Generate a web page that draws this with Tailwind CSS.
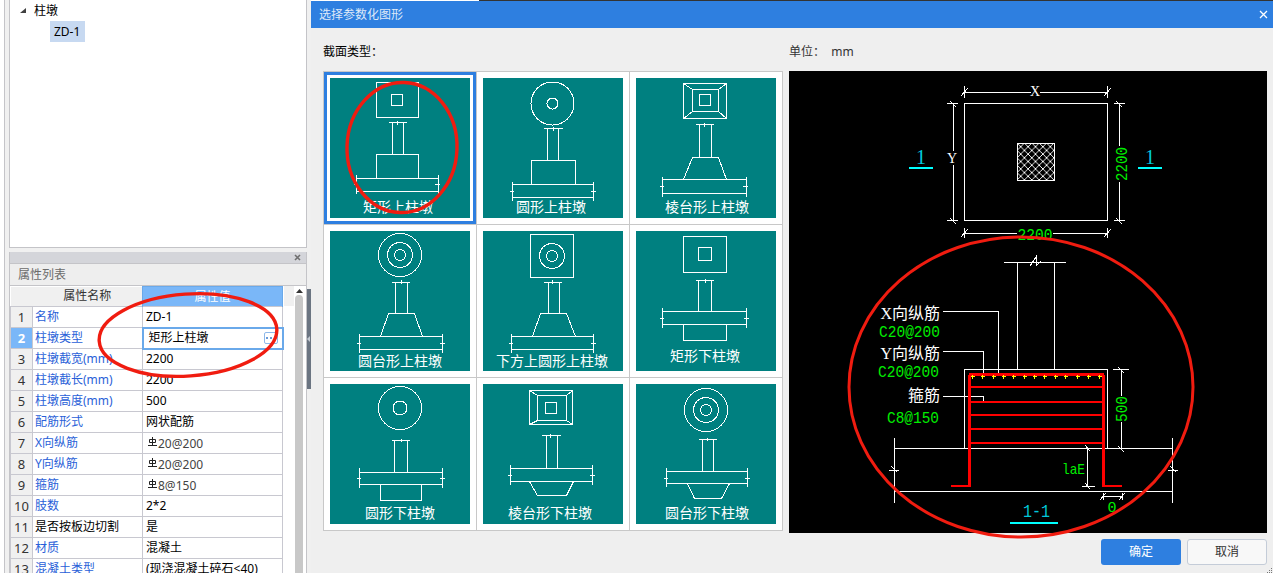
<!DOCTYPE html>
<html lang="zh-CN">
<head>
    <meta charset="UTF-8">
    <title>选择参数化图形</title>
    <script src="https://cdn.jsdelivr.net/npm/@tailwindcss/browser@4"></script>
</head>
<body class="bg-white">
<div class="relative flex w-[1273px] h-[573px] overflow-hidden bg-white text-[12px] leading-none font-['Noto_Sans','Noto_Sans_CJK_SC',sans-serif]">

    <!-- left: tree + property list -->
    <div class="flex ml-[4px] w-[307px] h-full shrink-0 border-l border-[#c4c4c8] bg-[#f0f0f0] pl-[4px]">
        <div class="flex flex-col w-[298px] h-full shrink-0">
            <div class="h-[248px] shrink-0 bg-white border-x border-b border-[#c4c4c8] relative">
                <div class="flex items-center h-[21px] pl-[10px]">
                    <svg width="7" height="6" class="mr-[7px]"><path d="M6 0V5H0Z" fill="#404040"/></svg>
                    <span class="text-black">柱墩</span>
                </div>
                <div class="ml-[40px] w-[35px] h-[21px] bg-[#c7d9f1] flex items-center pl-[4px] text-black">ZD-1</div>
            </div>
            <div class="mt-[4px] h-[12px] shrink-0 bg-[#d4d5da] border-x border-b border-[#c4c4c8] flex items-center justify-end pr-[5px]">
                <svg width="7" height="7"><path d="M1 1L6 6M6 1L1 6" stroke="#6f6f6f" stroke-width="1.6"/></svg>
            </div>
            <div class="h-[22px] shrink-0 bg-[#eeeeee] border-x border-b border-[#c4c4c8] flex items-center pl-[8px] text-[#6b6b6b]">属性列表</div>
            <div class="flex flex-1 min-h-0 bg-white border-x border-[#c4c4c8]">
                <table class="table-fixed border-collapse w-[272px] h-[20px] shrink-0 self-start">
                    <colgroup><col class="w-[22px]"><col class="w-[110px]"><col class="w-[140px]"></colgroup>
                    <thead>
                        <tr class="h-[20px]">
                            <th class="bg-[#f0f0f0] p-0"></th>
                            <th class="bg-[#f0f0f0] p-0 font-normal text-[#333333]">属性名称</th>
                            <th class="bg-[#7ab7f8] p-0 font-normal text-white border-x border-t border-[#6aa9ea]">属性值</th>
                        </tr>
                    </thead>
                    <tbody class="text-black">
                        <tr class="h-[21px]"><td class="border border-[#c8c8d0] bg-[#f0f0f0] text-center text-[13px] p-0 text-[#333333]">1</td><td class="border border-[#c8c8d0] pl-[2px] text-[#2a5fd8] p-0">名称</td><td class="border border-[#c8c8d0] pl-[3px] p-0">ZD-1</td></tr>
                        <tr class="h-[21px]"><td class="border border-[#c8c8d0] bg-[#7ab7f8] text-center text-[13px] p-0 text-white font-bold">2</td><td class="border border-[#c8c8d0] pl-[2px] text-[#2a5fd8] p-0">柱墩类型</td><td class="border-2 border-[#6aa9ea] pl-[5px] p-0 relative">矩形上柱墩<span class="absolute right-[4px] top-[3px] w-[14px] h-[12px] flex items-center justify-center border border-[#8db8ea] rounded-[2px] bg-white"><svg width="10" height="2"><path d="M0 0H2V2H0ZM4 0H6V2H4ZM8 0H10V2H8Z" fill="#6a9bd8"/></svg></span></td></tr>
                        <tr class="h-[21px]"><td class="border border-[#c8c8d0] bg-[#f0f0f0] text-center text-[13px] p-0 text-[#333333]">3</td><td class="border border-[#c8c8d0] pl-[2px] text-[#2a5fd8] p-0">柱墩截宽(mm)</td><td class="border border-[#c8c8d0] pl-[3px] p-0">2200</td></tr>
                        <tr class="h-[21px]"><td class="border border-[#c8c8d0] bg-[#f0f0f0] text-center text-[13px] p-0 text-[#333333]">4</td><td class="border border-[#c8c8d0] pl-[2px] text-[#2a5fd8] p-0">柱墩截长(mm)</td><td class="border border-[#c8c8d0] pl-[3px] p-0">2200</td></tr>
                        <tr class="h-[21px]"><td class="border border-[#c8c8d0] bg-[#f0f0f0] text-center text-[13px] p-0 text-[#333333]">5</td><td class="border border-[#c8c8d0] pl-[2px] text-[#2a5fd8] p-0">柱墩高度(mm)</td><td class="border border-[#c8c8d0] pl-[3px] p-0">500</td></tr>
                        <tr class="h-[21px]"><td class="border border-[#c8c8d0] bg-[#f0f0f0] text-center text-[13px] p-0 text-[#333333]">6</td><td class="border border-[#c8c8d0] pl-[2px] text-[#2a5fd8] p-0">配筋形式</td><td class="border border-[#c8c8d0] pl-[3px] p-0">网状配筋</td></tr>
                        <tr class="h-[21px]"><td class="border border-[#c8c8d0] bg-[#f0f0f0] text-center text-[13px] p-0 text-[#333333]">7</td><td class="border border-[#c8c8d0] pl-[2px] text-[#2a5fd8] p-0">X向纵筋</td><td class="border border-[#c8c8d0] pl-[5px] p-0 text-[#444444]"><svg width="9" height="9" class="inline align-[2px] mr-[1px]"><path d="M4.5 0V9M1.5 2.5H7.5V5.5H1.5ZM0 8.5H9" fill="none" stroke="#222222"/></svg>20@200</td></tr>
                        <tr class="h-[21px]"><td class="border border-[#c8c8d0] bg-[#f0f0f0] text-center text-[13px] p-0 text-[#333333]">8</td><td class="border border-[#c8c8d0] pl-[2px] text-[#2a5fd8] p-0">Y向纵筋</td><td class="border border-[#c8c8d0] pl-[5px] p-0 text-[#444444]"><svg width="9" height="9" class="inline align-[2px] mr-[1px]"><path d="M4.5 0V9M1.5 2.5H7.5V5.5H1.5ZM0 8.5H9" fill="none" stroke="#222222"/></svg>20@200</td></tr>
                        <tr class="h-[21px]"><td class="border border-[#c8c8d0] bg-[#f0f0f0] text-center text-[13px] p-0 text-[#333333]">9</td><td class="border border-[#c8c8d0] pl-[2px] text-[#2a5fd8] p-0">箍筋</td><td class="border border-[#c8c8d0] pl-[5px] p-0 text-[#444444]"><svg width="9" height="9" class="inline align-[2px] mr-[1px]"><path d="M4.5 0V9M1.5 2.5H7.5V5.5H1.5ZM0 8.5H9" fill="none" stroke="#222222"/></svg>8@150</td></tr>
                        <tr class="h-[21px]"><td class="border border-[#c8c8d0] bg-[#f0f0f0] text-center text-[13px] p-0 text-[#333333]">10</td><td class="border border-[#c8c8d0] pl-[2px] text-[#2a5fd8] p-0">肢数</td><td class="border border-[#c8c8d0] pl-[3px] p-0">2*2</td></tr>
                        <tr class="h-[21px]"><td class="border border-[#c8c8d0] bg-[#f0f0f0] text-center text-[13px] p-0 text-[#333333]">11</td><td class="border border-[#c8c8d0] pl-[2px] p-0">是否按板边切割</td><td class="border border-[#c8c8d0] pl-[3px] p-0">是</td></tr>
                        <tr class="h-[21px]"><td class="border border-[#c8c8d0] bg-[#f0f0f0] text-center text-[13px] p-0 text-[#333333]">12</td><td class="border border-[#c8c8d0] pl-[2px] text-[#2a5fd8] p-0">材质</td><td class="border border-[#c8c8d0] pl-[3px] p-0">混凝土</td></tr>
                        <tr class="h-[21px]"><td class="border border-[#c8c8d0] bg-[#f0f0f0] text-center text-[13px] p-0 text-[#333333]">13</td><td class="border border-[#c8c8d0] pl-[2px] text-[#2a5fd8] p-0">混凝土类型</td><td class="border border-[#c8c8d0] pl-[3px] p-0">(现浇混凝土碎石&lt;40)</td></tr>
                    </tbody>
                </table>
                <div class="w-[10px] h-[20px] bg-[#f0f0f0] shrink-0"></div>
                <div class="flex-1 flex flex-col items-center pr-[1px]">
                    <svg width="9" height="5" class="mt-[3px] mb-[1px]"><path d="M4.5 0L8 4H1Z" fill="#333333"/></svg>
                    <div class="w-[8px] flex-1 bg-[#c8c8c8] rounded-t-[4px]"></div>
                </div>
            </div>
        </div>
        <div class="w-[4px] h-[100px] mt-[289px] bg-[#6b7582] flex items-center shrink-0">
            <svg width="4" height="8"><path d="M3 1V7L0 4Z" fill="#c5ccd4"/></svg>
        </div>
    </div>

    <!-- dialog -->
    <div class="flex flex-col flex-1 min-w-0 h-full bg-[#efefef]">
        <div class="flex h-[1px] shrink-0 bg-white"><div class="ml-[168px] flex-1 bg-[#333333]"></div></div>
        <div class="flex items-center justify-between h-[27px] shrink-0 bg-[#2e7fe0] pl-[8px] pr-[5px] text-[#dfe9f8]">
            <span>选择参数化图形</span>
            <svg width="9" height="9"><path d="M1 1L8 8M8 1L1 8" stroke="#ffffff" stroke-width="1.3"/></svg>
        </div>
        <div class="flex h-[43px] shrink-0 items-center pl-[12px] pt-[5px] text-black">
            <span class="w-[466px]">截面类型：</span>
            <span class="text-[#333333]">单位：&nbsp; mm</span>
        </div>
        <div class="flex pl-[12px] gap-[6px] items-start">
            <!-- section type tiles -->
            <div class="grid grid-cols-[repeat(3,153px)] border-l border-t border-[#c8c8c8] bg-white">
                <div class="p-[6px] border-r border-b border-[#c8c8c8]">
                    <svg width="140" height="140" shape-rendering="crispEdges" class="block bg-[#008080] outline-3 outline-offset-[3px] outline-[#2e7fe0]" fill="none" stroke="#ffffff">
                        <rect x="46.5" y="4.5" width="42" height="35"/><rect x="61.5" y="16.5" width="11" height="11"/>
                        <path d="M58.5 44.5H76.5M67.5 43V47M62.5 44.5V76.5M73.5 44.5V76.5M46.5 100.5V76.5H88.5V100.5M26.5 97V116M108.5 97V116M26.5 100.5H108.5M26.5 113.5H108.5M24 106.5H28M105 106.5H110"/>
                        <text x="68" y="134" text-anchor="middle" fill="#ffffff" stroke="none" class="text-[14px]">矩形上柱墩</text>
                    </svg>
                </div>
                <div class="p-[6px] border-r border-b border-[#c8c8c8]">
                    <svg width="140" height="140" shape-rendering="crispEdges" class="block bg-[#008080]" fill="none" stroke="#ffffff">
                        <circle cx="69.5" cy="25.5" r="21.5"/><circle cx="69.5" cy="25.5" r="5.5"/>
                        <path d="M60.5 50.5H79.5M70 49V53M64.5 50.5V82.5M75.5 50.5V82.5M48.5 106.5V82.5H92.5V106.5M29.5 104V123M110.5 104V123M29.5 106.5H110.5M29.5 119.5H110.5M27 113.5H31M108 113.5H113"/>
                        <text x="68" y="134" text-anchor="middle" fill="#ffffff" stroke="none" class="text-[14px]">圆形上柱墩</text>
                    </svg>
                </div>
                <div class="p-[6px] border-r border-b border-[#c8c8c8]">
                    <svg width="140" height="140" shape-rendering="crispEdges" class="block bg-[#008080]" fill="none" stroke="#ffffff">
                        <rect x="47.5" y="5.5" width="43" height="35"/><rect x="56.5" y="11.5" width="26" height="22"/><rect x="63.5" y="16.5" width="11" height="11"/>
                        <path d="M47.5 5.5L56.5 11.5M90.5 5.5L82.5 11.5M47.5 40.5L56.5 33.5M90.5 40.5L82.5 33.5"/>
                        <path d="M59.5 46.5H77.5M68 45V49M63.5 46.5V79.5M75.5 46.5V79.5M47.5 101.5L56.5 79.5H82.5L90.5 101.5M26.5 99V119M110.5 99V119M26.5 101.5H110.5M26.5 115.5H110.5M24 108.5H28M107 108.5H112"/>
                        <text x="71" y="134" text-anchor="middle" fill="#ffffff" stroke="none" class="text-[14px]">棱台形上柱墩</text>
                    </svg>
                </div>
                <div class="p-[6px] border-r border-b border-[#c8c8c8]">
                    <svg width="140" height="140" shape-rendering="crispEdges" class="block bg-[#008080]" fill="none" stroke="#ffffff">
                        <circle cx="70" cy="24" r="21.5"/><circle cx="70" cy="24" r="12.5"/><circle cx="70" cy="24" r="5.5"/>
                        <path d="M61.5 51.5H79.5M71 49V53M65.5 51.5V82.5M77.5 51.5V82.5M50.5 105.5L58.5 82.5H84.5L92.5 105.5M29.5 103V122M112.5 103V122M29.5 105.5H112.5M29.5 118.5H112.5M27 112.5H31M110 112.5H115"/>
                        <text x="70" y="135" text-anchor="middle" fill="#ffffff" stroke="none" class="text-[14px]">圆台形上柱墩</text>
                    </svg>
                </div>
                <div class="p-[6px] border-r border-b border-[#c8c8c8]">
                    <svg width="140" height="140" shape-rendering="crispEdges" class="block bg-[#008080]" fill="none" stroke="#ffffff">
                        <rect x="47.5" y="3.5" width="43" height="43"/><circle cx="69" cy="25" r="12.5"/><circle cx="69" cy="25" r="5.5"/>
                        <path d="M60.5 51.5H78.5M69 49V53M65.5 51.5V82.5M76.5 51.5V82.5M49.5 105.5L57.5 82.5H83.5L92.5 105.5M28.5 103V122M110.5 103V122M28.5 105.5H110.5M28.5 118.5H110.5M26 112.5H30M108 112.5H113"/>
                        <text x="69" y="135" text-anchor="middle" fill="#ffffff" stroke="none" class="text-[14px]">下方上圆形上柱墩</text>
                    </svg>
                </div>
                <div class="p-[6px] border-r border-b border-[#c8c8c8]">
                    <svg width="140" height="140" shape-rendering="crispEdges" class="block bg-[#008080]" fill="none" stroke="#ffffff">
                        <rect x="47.5" y="5.5" width="43" height="36"/><rect x="62.5" y="16.5" width="13" height="13"/>
                        <path d="M59.5 49.5H77.5M69 48V52M62.5 49.5V80.5M75.5 49.5V80.5M26.5 77V97M110.5 77V97M26.5 80.5H110.5M26.5 93.5H110.5M24 87.5H28M108 87.5H113M47.5 93.5V109.5H90.5V93.5"/>
                        <text x="69" y="130" text-anchor="middle" fill="#ffffff" stroke="none" class="text-[14px]">矩形下柱墩</text>
                    </svg>
                </div>
                <div class="p-[6px] border-r border-b border-[#c8c8c8]">
                    <svg width="140" height="140" shape-rendering="crispEdges" class="block bg-[#008080]" fill="none" stroke="#ffffff">
                        <circle cx="70" cy="24" r="21.5"/><circle cx="70" cy="24" r="7"/>
                        <path d="M61.5 56.5H79.5M71 55V58M64.5 56.5V88.5M77.5 56.5V88.5M29.5 84V104M112.5 84V104M29.5 88.5H112.5M29.5 100.5H112.5M27 94.5H31M110 94.5H115M50.5 100.5V116.5H91.5V100.5"/>
                        <text x="70" y="134" text-anchor="middle" fill="#ffffff" stroke="none" class="text-[14px]">圆形下柱墩</text>
                    </svg>
                </div>
                <div class="p-[6px] border-r border-b border-[#c8c8c8]">
                    <svg width="140" height="140" shape-rendering="crispEdges" class="block bg-[#008080]" fill="none" stroke="#ffffff">
                        <rect x="46.5" y="6.5" width="43" height="34"/><rect x="54.5" y="11.5" width="29" height="25"/><rect x="62.5" y="18.5" width="11" height="11"/>
                        <path d="M46.5 6.5L54.5 11.5M89.5 6.5L83.5 11.5M46.5 40.5L54.5 36.5M89.5 40.5L83.5 36.5"/>
                        <path d="M58.5 51.5H77.5M67 50V54M63.5 51.5V84.5M74.5 51.5V84.5M27.5 81V101M109.5 81V101M27.5 84.5H109.5M27.5 97.5H109.5M25 91.5H29M107 91.5H112M46.5 97.5L54.5 111.5H83.5L90.5 97.5"/>
                        <text x="67" y="134" text-anchor="middle" fill="#ffffff" stroke="none" class="text-[14px]">棱台形下柱墩</text>
                    </svg>
                </div>
                <div class="p-[6px] border-r border-b border-[#c8c8c8]">
                    <svg width="140" height="140" shape-rendering="crispEdges" class="block bg-[#008080]" fill="none" stroke="#ffffff">
                        <circle cx="70" cy="26" r="21.5"/><circle cx="70" cy="26" r="12.5"/><circle cx="70" cy="26" r="5.5"/>
                        <path d="M62.5 55.5H80.5M71 54V57M66.5 55.5V87.5M77.5 55.5V87.5M30.5 84V103M111.5 84V103M30.5 87.5H111.5M30.5 99.5H111.5M28 94.5H32M109 94.5H114M51.5 99.5L58.5 114.5H85.5L93.5 99.5"/>
                        <text x="71" y="134" text-anchor="middle" fill="#ffffff" stroke="none" class="text-[14px]">圆台形下柱墩</text>
                    </svg>
                </div>
            </div>

            <!-- CAD preview, viewBox in page coordinates -->
            <svg width="478" height="462" viewBox="789 71 478 462" shape-rendering="crispEdges" class="block bg-black shrink-0 font-['Liberation_Mono','Noto_Sans_CJK_SC',monospace]" fill="none" stroke="#ffffff">
                <defs>
                    <pattern id="hatch" width="7.4" height="7.4" patternUnits="userSpaceOnUse" x="1017" y="143">
                        <path d="M0 0L7.4 7.4M7.4 0L0 7.4" stroke="#ffffff" stroke-width="1.1"/>
                    </pattern>
                </defs>
                <!-- plan -->
                <rect x="964.5" y="103.5" width="143" height="117"/>
                <rect x="1017.5" y="143.5" width="37" height="37" fill="url(#hatch)"/>
                <path d="M964.5 86V98M1107.5 86V98M964.5 92H1031M1040 92H1107.5M961 96L968 88M1104 96L1111 88"/>
                <path d="M947 103.5H958M947 220.5H958M953 103.5V151M953 165V220.5M950 101L956 107M950 218L956 224"/>
                <path d="M1114 103.5H1125M1114 220.5H1125M1119.5 103.5V146M1119.5 182V220.5M1116 101L1122 107M1116 218L1122 224"/>
                <path d="M964.5 228V238M1107.5 228V238M964.5 233H1017M1053 233H1107.5M961 237L968 229M1104 237L1111 229"/>
                <text x="1035" y="96" text-anchor="middle" fill="#ffffff" stroke="none" class="text-[14px] font-['Liberation_Serif']">X</text>
                <text x="952" y="163" text-anchor="middle" fill="#ffffff" stroke="none" class="text-[14px] font-['Liberation_Serif']">Y</text>
                <text x="1127" y="164" text-anchor="middle" transform="rotate(-90 1127 164)" fill="#00ee00" stroke="none" class="text-[16px]" textLength="34" lengthAdjust="spacingAndGlyphs">2200</text>
                <text x="1035" y="240" text-anchor="middle" fill="#00ee00" stroke="none" class="text-[16px]" textLength="35" lengthAdjust="spacingAndGlyphs">2200</text>
                <text x="921" y="164" text-anchor="middle" fill="#00c8dc" stroke="none" class="text-[20px] font-['Liberation_Serif']">1</text>
                <text x="1150" y="164" text-anchor="middle" fill="#00c8dc" stroke="none" class="text-[20px] font-['Liberation_Serif']">1</text>
                <path d="M909 168H933M1138 168H1162" stroke="#00ffff" stroke-width="2"/>

                <!-- section -->
                <path d="M1004 262H1066M1017.5 262V369.5M1054.5 262V369.5M1030 266L1036 257V266L1041 261"/>
                <path d="M964.5 448V369.5H1107.5V448M894.5 448H1172.5M894.5 491.5H1172.5M894.5 438V503M1172.5 438V503M889 470H899M1168 470H1178M891 466L897 472M1170 466L1176 472"/>
                <path d="M943 311.5H998.5V374M943 351.5H983.5V374M943 396.5H983.5V402"/>
                <path d="M1113 369.5H1129M1121.5 369.5V396M1121.5 422V448M1118 367L1124 373M1118 446L1124 452"/>
                <path d="M1087.5 448V486M1082 486H1095M1085 445L1090 451M1085 483L1090 489"/>
                <path d="M1103 496.5H1122M1103 493V500M1122 493V500M1100 500L1106 493M1119 500L1125 493"/>
                <path d="M969.5 374.5V486H951M1103.5 374.5V486H1122" stroke="#ff0000" stroke-width="2.5"/>
                <path d="M969 374.5H1104" stroke="#ff0000" stroke-width="2.5"/>
                <path d="M970 387H1103M970 402H1103M970 415H1103M970 429H1103M970 443H1103" stroke="#ff0000" stroke-width="2"/>
                <path d="M972.5 374.5V378.5M970.5 376.5H974.5M982.5 374.5V378.5M980.5 376.5H984.5M993.5 374.5V378.5M991.5 376.5H995.5M1003.5 374.5V378.5M1001.5 376.5H1005.5M1013.5 374.5V378.5M1011.5 376.5H1015.5M1024.5 374.5V378.5M1022.5 376.5H1026.5M1034.5 374.5V378.5M1032.5 376.5H1036.5M1044.5 374.5V378.5M1042.5 376.5H1046.5M1055.5 374.5V378.5M1053.5 376.5H1057.5M1065.5 374.5V378.5M1063.5 376.5H1067.5M1077.5 374.5V378.5M1075.5 376.5H1079.5M1088.5 374.5V378.5M1086.5 376.5H1090.5M1099.5 374.5V378.5M1097.5 376.5H1101.5" stroke="#ffff00"/>
                <text x="940" y="319" text-anchor="end" fill="#ffffff" stroke="none" class="text-[16px] font-['Liberation_Serif','Noto_Sans_CJK_SC']">X向纵筋</text>
                <text x="879" y="337" fill="#00ee00" stroke="none" class="text-[16px]" textLength="61" lengthAdjust="spacingAndGlyphs">C20@200</text>
                <text x="940" y="359" text-anchor="end" fill="#ffffff" stroke="none" class="text-[16px] font-['Liberation_Serif','Noto_Sans_CJK_SC']">Y向纵筋</text>
                <text x="878" y="377" fill="#00ee00" stroke="none" class="text-[16px]" textLength="61" lengthAdjust="spacingAndGlyphs">C20@200</text>
                <text x="940" y="401" text-anchor="end" fill="#ffffff" stroke="none" class="text-[16px] font-['Liberation_Serif','Noto_Sans_CJK_SC']">箍筋</text>
                <text x="887" y="423" fill="#00ee00" stroke="none" class="text-[16px]" textLength="52" lengthAdjust="spacingAndGlyphs">C8@150</text>
                <text x="1127" y="409" text-anchor="middle" transform="rotate(-90 1127 409)" fill="#00ee00" stroke="none" class="text-[16px]" textLength="26" lengthAdjust="spacingAndGlyphs">500</text>
                <text x="1062" y="474" fill="#00ee00" stroke="none" class="text-[15px]" textLength="23" lengthAdjust="spacingAndGlyphs">laE</text>
                <text x="1112" y="512" text-anchor="middle" fill="#00ee00" stroke="none" class="text-[15px]">0</text>
                <text x="1023" y="517" fill="#00c8dc" stroke="none" class="text-[19px]" textLength="27" lengthAdjust="spacingAndGlyphs">1-1</text>
                <path d="M1010 523H1058" stroke="#00ffff" stroke-width="2"/>
            </svg>
        </div>
        <div class="flex justify-end gap-[6px] pr-[6px] mt-[6px]">
            <button class="w-[80px] h-[26px] rounded-[3px] bg-[#2e7fe0] text-white">确定</button>
            <button class="w-[80px] h-[26px] rounded-[3px] bg-[#f8f8f8] border border-[#c4ccd8] text-[#333333]">取消</button>
        </div>
    </div>

    <!-- hand-drawn red markup over the screenshot -->
    <svg width="1273" height="573" class="absolute inset-0 pointer-events-none" fill="none" stroke="#f01c10" stroke-width="3.4">
        <ellipse cx="402" cy="147.5" rx="55" ry="65" transform="rotate(2 402 147.5)"/>
        <ellipse cx="188" cy="335" rx="89" ry="41" transform="rotate(-4 188 335)"/>
        <ellipse cx="1021" cy="387" rx="172" ry="150" stroke-width="3"/>
    </svg>
    <svg width="6" height="6" class="absolute right-0 bottom-0"><path d="M4 1H5V2H4ZM2 3H3V4H2ZM4 3H5V4H4ZM0 5H1V6H0ZM2 5H3V6H2ZM4 5H5V6H4Z" fill="#777777"/></svg>
</div>
</body>
</html>
